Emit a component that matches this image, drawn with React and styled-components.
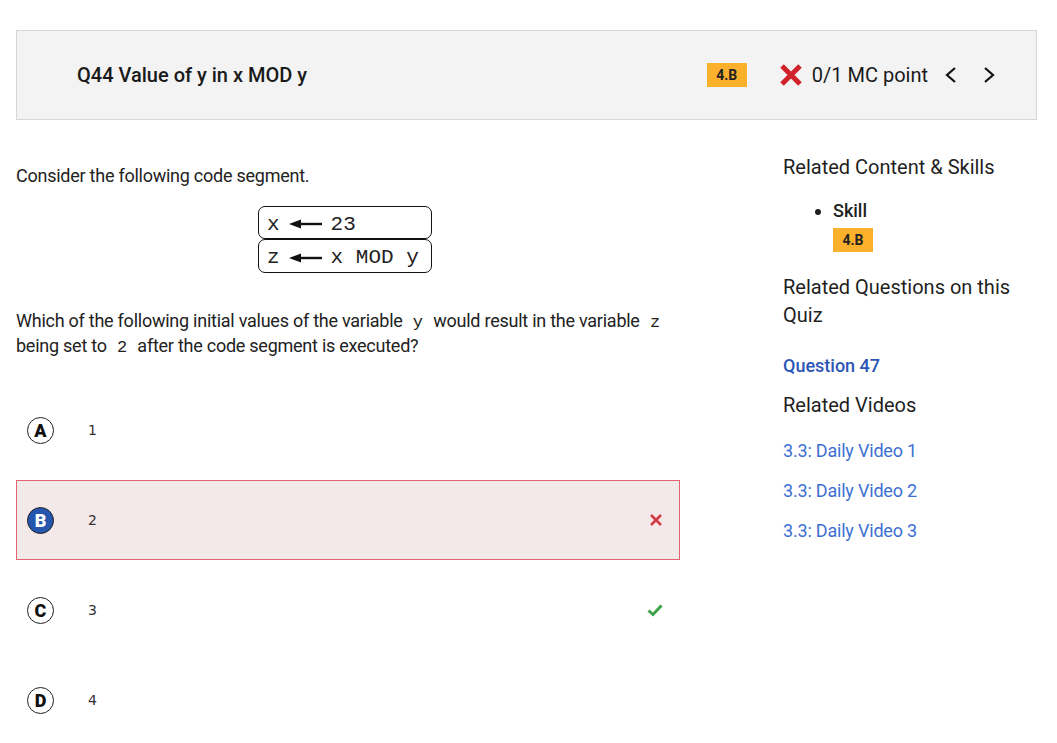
import React from "react"
import styled, { createGlobalStyle } from "styled-components"

const Global = createGlobalStyle`
  body {
    margin: 0;
    background: #fff;
    font-family: Roboto, "Liberation Sans", sans-serif;
    color: #1f1f1f;
  }
`

const Page = styled.div`
  padding: 30px 20px 0 16px;
`

const Header = styled.div`
  height: 88px;
  background: #f3f3f3;
  border: 1px solid #d6d6d6;
  display: flex;
  align-items: center;
  padding: 0 40px 0 60px;
`

const Title = styled.h1`
  flex: 1;
  margin: 0;
  font-size: 20px;
  font-weight: 500;
  color: #1a1a1a;
`

const Badge = styled.span`
  display: inline-flex;
  align-items: center;
  justify-content: center;
  width: 40px;
  height: 24px;
  background: #fbb02b;
  color: #222;
  font-size: 14px;
  font-weight: 700;
`

const Score = styled.div`
  display: flex;
  align-items: center;
  margin-left: 32px;
  font-size: 20px;
  color: #1a1a1a;
  gap: 9px;
`

const Nav = styled.button`
  background: none;
  border: 0;
  padding: 0;
  margin-left: ${p => p.$gap}px;
  display: flex;
  color: #111;
`

const Body = styled.div`
  display: grid;
  grid-template-columns: 664px 1fr;
  column-gap: 103px;
`

const Main = styled.div`
  padding-top: 43px;
`

const Text = styled.p`
  margin: 0;
  font-size: 18px;
  line-height: 25px;
  color: #222;
  letter-spacing: -0.25px;
`

const Code = styled.code`
  font-family: "Liberation Mono", monospace;
  font-size: 17px;
  line-height: 1;
  padding: 0 6px;
  letter-spacing: 0;
`

const CodeStack = styled.div`
  display: flex;
  flex-direction: column;
  align-items: flex-start;
  margin: 18px 0 0 242px;
`

const CodeLine = styled.div`
  width: 174px;
  height: ${p => p.$h}px;
  box-sizing: border-box;
  border: 1.5px solid #111;
  border-radius: 7px;
  display: flex;
  align-items: center;
  gap: 9px;
  padding: 3px 0 0 8px;
  font-family: "Liberation Mono", monospace;
  font-size: 21px;
  color: #222;
`

const Question = styled(Text)`
  margin-top: 35px;
`

const Options = styled.div`
  margin-top: 32px;
`

const Option = styled.div`
  height: 80px;
  margin-bottom: 10px;
  box-sizing: border-box;
  display: flex;
  align-items: center;
  padding: 0 16px 0 10px;
  background: ${p => (p.$wrong ? "#f4e9e9" : "transparent")};
  border: 1px solid ${p => (p.$wrong ? "#e0646f" : "transparent")};
`

const Letter = styled.span`
  width: 27px;
  height: 27px;
  box-sizing: border-box;
  border-radius: 50%;
  border: 1.5px solid #222;
  display: flex;
  align-items: center;
  justify-content: center;
  font-size: 18px;
  font-weight: 900;
  background: ${p => (p.$selected ? "#2456ae" : "#fff")};
  color: ${p => (p.$selected ? "#fff" : "#111")};
`

const Answer = styled.span`
  flex: 1;
  margin-left: 34px;
  font-family: "DejaVu Sans", sans-serif;
  font-size: 14px;
  color: #333;
`

const Side = styled.aside`
  padding-top: 33px;
`

const SideHeading = styled.h2`
  margin: 0;
  font-size: 20px;
  font-weight: 400;
  line-height: 28px;
  color: #1f1f1f;
`

const SkillList = styled.ul`
  margin: 16px 0 20px;
  padding-left: 50px;
  font-size: 18px;
  font-weight: 500;
  line-height: 28px;
`

const QuestionLink = styled.a`
  display: block;
  margin: 26px 0 15px;
  font-size: 18px;
  font-weight: 500;
  color: #2c56b5;
  text-decoration: none;
`

const VideoLinks = styled.div`
  display: flex;
  flex-direction: column;
  gap: 14px;
  margin-top: 19px;
`

const VideoLink = styled.a`
  font-size: 18px;
  line-height: 26px;
  color: #3e6fd3;
  text-decoration: none;
  letter-spacing: -0.2px;
`

const Arrow = () => (
  <svg width="33" height="10" viewBox="0 0 33 10">
    <path d="M0 5 L12 0.5 L12 9.5 Z" fill="#111" />
    <rect x="10" y="3.8" width="23" height="2.4" fill="#111" />
  </svg>
)

const BigX = () => (
  <svg width="24" height="24" viewBox="0 0 24 24">
    <path d="M3 3 L21 21 M21 3 L3 21" stroke="#d0222a" strokeWidth="5" />
  </svg>
)

const SmallX = () => (
  <svg width="14" height="14" viewBox="0 0 14 14">
    <path d="M2 2 L12 12 M12 2 L2 12" stroke="#d23a46" strokeWidth="2.6" />
  </svg>
)

const Check = () => (
  <svg width="16" height="14" viewBox="0 0 16 14">
    <path d="M1.5 7.5 L6 11.5 L14.5 2.5" stroke="#3ea24a" strokeWidth="3" fill="none" />
  </svg>
)

const Chevron = ({ dir }) => (
  <svg width="14" height="20" viewBox="0 0 14 20">
    <path
      d={dir === "left" ? "M11 3 L3 10 L11 17" : "M3 3 L11 10 L3 17"}
      stroke="#111"
      strokeWidth="2.2"
      fill="none"
    />
  </svg>
)

const options = [
  { letter: "A", value: "1" },
  { letter: "B", value: "2", selected: true, wrong: true },
  { letter: "C", value: "3", correct: true },
  { letter: "D", value: "4" },
]

export default function App() {
  return (
    <Page>
      <Global />
      <Header>
        <Title>Q44 Value of y in x MOD y</Title>
        <Badge>4.B</Badge>
        <Score>
          <BigX />
          <span>0/1 MC point</span>
        </Score>
        <Nav $gap={16}>
          <Chevron dir="left" />
        </Nav>
        <Nav $gap={24}>
          <Chevron dir="right" />
        </Nav>
      </Header>
      <Body>
        <Main>
          <Text>Consider the following code segment.</Text>
          <CodeStack>
            <CodeLine $h={33}>
              <span>x</span>
              <Arrow />
              <span>23</span>
            </CodeLine>
            <CodeLine $h={34}>
              <span>z</span>
              <Arrow />
              <span>x MOD y</span>
            </CodeLine>
          </CodeStack>
          <Question>
            Which of the following initial values of the variable <Code>y</Code> would result in the
            variable <Code>z</Code>
            <br />
            being set to <Code>2</Code> after the code segment is executed?
          </Question>
          <Options>
            {options.map(o => (
              <Option key={o.letter} $wrong={o.wrong}>
                <Letter $selected={o.selected}>{o.letter}</Letter>
                <Answer>{o.value}</Answer>
                {o.wrong && <SmallX />}
                {o.correct && <Check />}
              </Option>
            ))}
          </Options>
        </Main>
        <Side>
          <SideHeading>Related Content &amp; Skills</SideHeading>
          <SkillList>
            <li>
              Skill
              <br />
              <Badge>4.B</Badge>
            </li>
          </SkillList>
          <SideHeading>Related Questions on this Quiz</SideHeading>
          <QuestionLink href="#">Question 47</QuestionLink>
          <SideHeading>Related Videos</SideHeading>
          <VideoLinks>
            <VideoLink href="#">3.3: Daily Video 1</VideoLink>
            <VideoLink href="#">3.3: Daily Video 2</VideoLink>
            <VideoLink href="#">3.3: Daily Video 3</VideoLink>
          </VideoLinks>
        </Side>
      </Body>
    </Page>
  )
}
